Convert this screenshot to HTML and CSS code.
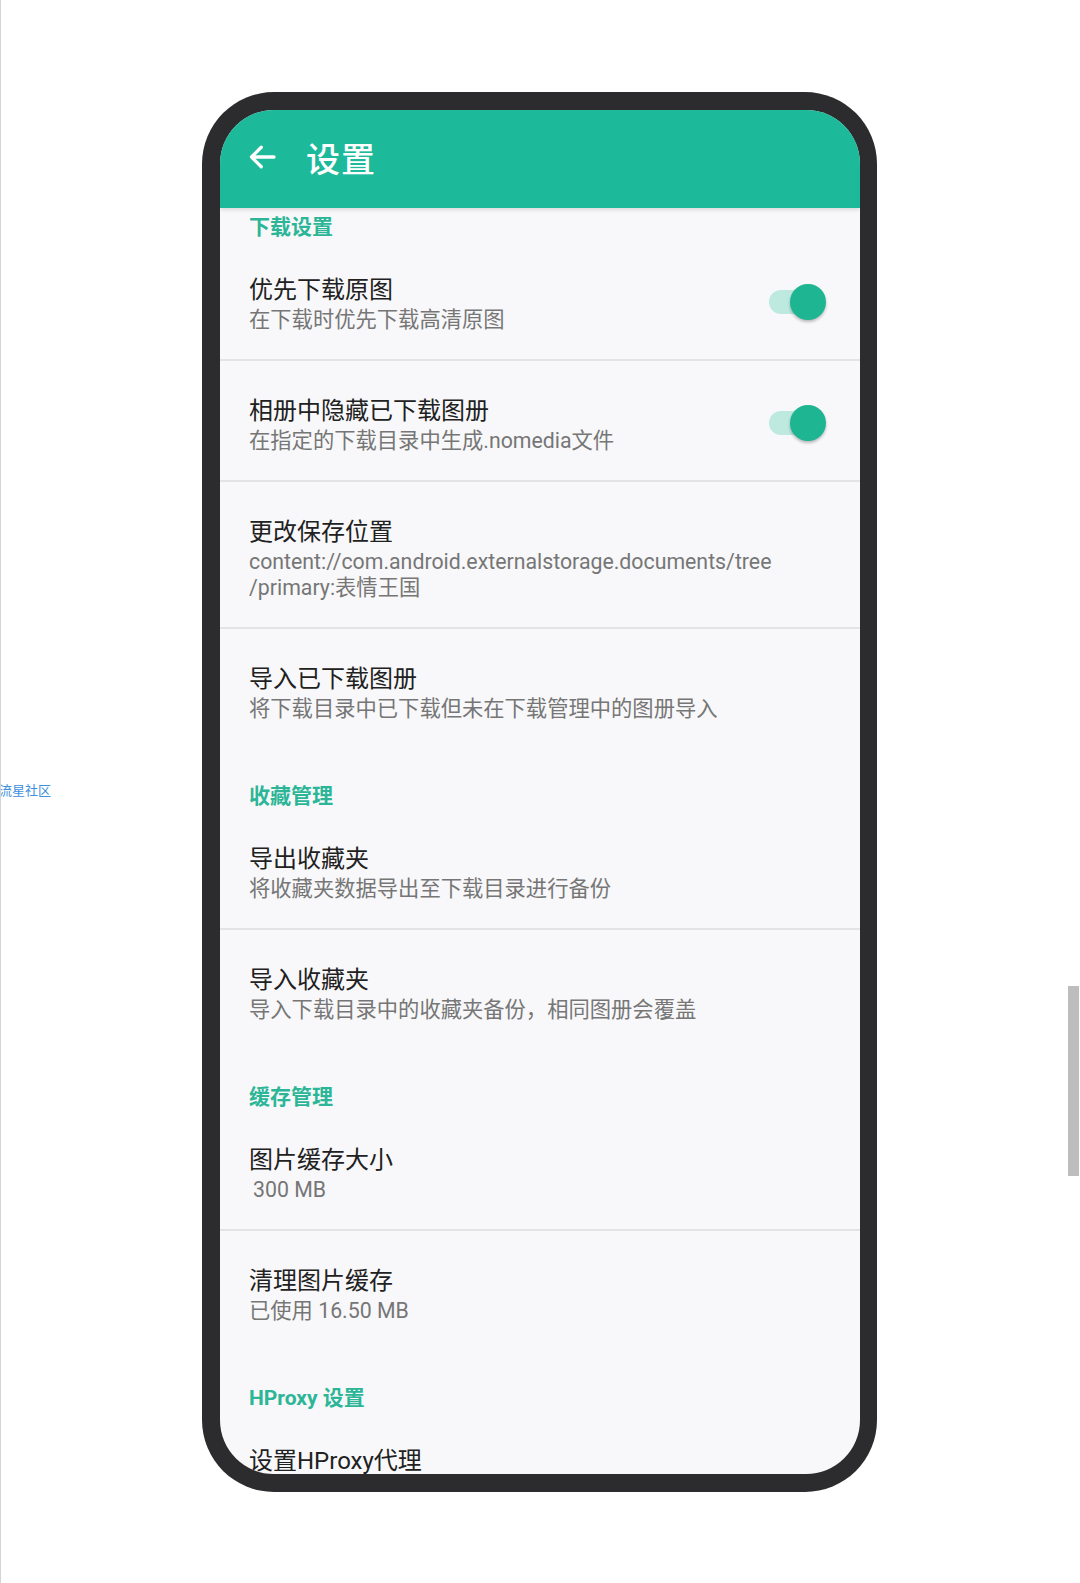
FILE: index.html
```html
<!DOCTYPE html>
<html lang="zh-CN">
<head>
  <meta charset="UTF-8" />
  <title>设置</title>
  <link rel="stylesheet" href="styles.css">
</head>
<body>
  <div class="page">
    <div class="watermark">流星社区</div>
    <div class="scrollbar"></div>

    <div class="phone">
      <div class="screen">
        <div class="appbar">
          <svg class="back" viewBox="0 0 24 24" width="36" height="36">
            <path d="M20 12H5M11.5 5.5L5 12l6.5 6.5" fill="none" stroke="#fff" stroke-width="2.2" stroke-linecap="round" stroke-linejoin="round"/>
          </svg>
          <span class="appbar-title">设置</span>
        </div>

        <div class="list">
          <div class="section first">下载设置</div>
          <div class="item divided">
            <div class="text">
              <div class="title">优先下载原图</div>
              <div class="sub">在下载时优先下载高清原图</div>
            </div>
            <div class="switch"><span class="knob"></span></div>
          </div>
          <div class="item divided">
            <div class="text">
              <div class="title">相册中隐藏已下载图册</div>
              <div class="sub">在指定的下载目录中生成.nomedia文件</div>
            </div>
            <div class="switch"><span class="knob"></span></div>
          </div>
          <div class="item divided">
            <div class="text">
              <div class="title">更改保存位置</div>
              <div class="sub">content://com.android.externalstorage.documents/tree<br>/primary:表情王国</div>
            </div>
          </div>
          <div class="item">
            <div class="text">
              <div class="title">导入已下载图册</div>
              <div class="sub">将下载目录中已下载但未在下载管理中的图册导入</div>
            </div>
          </div>

          <div class="section">收藏管理</div>
          <div class="item divided">
            <div class="text">
              <div class="title">导出收藏夹</div>
              <div class="sub">将收藏夹数据导出至下载目录进行备份</div>
            </div>
          </div>
          <div class="item">
            <div class="text">
              <div class="title">导入收藏夹</div>
              <div class="sub">导入下载目录中的收藏夹备份，相同图册会覆盖</div>
            </div>
          </div>

          <div class="section">缓存管理</div>
          <div class="item divided">
            <div class="text">
              <div class="title">图片缓存大小</div>
              <div class="sub indent">300 MB</div>
            </div>
          </div>
          <div class="item">
            <div class="text">
              <div class="title">清理图片缓存</div>
              <div class="sub">已使用 16.50 MB</div>
            </div>
          </div>

          <div class="section">HProxy 设置</div>
          <div class="item">
            <div class="text">
              <div class="title">设置HProxy代理</div>
            </div>
          </div>
        </div>
      </div>
    </div>
  </div>
</body>
</html>
```

FILE: styles.css
```css
body {
  margin: 0;
  background: #fff;
  font-family: Roboto, "Noto Sans CJK SC", sans-serif;
}
.page {
  position: relative;
  width: 1079px;
  height: 1583px;
  border-left: 1px solid #d4d4d4;
  overflow: hidden;
  padding: 92px 0 0 201px;
  box-sizing: border-box;
}
.watermark {
  position: absolute;
  left: -2px;
  top: 782px;
  font-size: 13px;
  line-height: 18px;
  color: #3d8fe0;
}
.scrollbar {
  position: absolute;
  right: 0;
  top: 986px;
  width: 11px;
  height: 190px;
  background: #bdbdbd;
}
.phone {
  width: 675px;
  height: 1400px;
  background: #2c2c2e;
  border-radius: 72px;
  padding: 18px 17px 18px 18px;
  box-sizing: border-box;
}
.screen {
  height: 100%;
  background: #f8f8fa;
  border-radius: 54px;
  overflow: hidden;
}
.appbar {
  height: 98px;
  background: #1cb99a;
  display: flex;
  align-items: center;
  padding: 0 0 4px 24px;
  box-sizing: border-box;
  box-shadow: 0 2px 4px rgba(0, 0, 0, 0.12);
  position: relative;
}
.appbar-title {
  color: #fff;
  font-size: 34px;
  font-weight: 500;
  margin-left: 26px;
  letter-spacing: 1px;
}
.section {
  padding: 35px 29px 2px;
  line-height: 22px;
  font-size: 21px;
  font-weight: 700;
  color: #2cb697;
}
.section.first {
  padding-top: 8px;
}
.item {
  display: flex;
  align-items: center;
  padding: 35px 34px 28px 29px;
}
.item.divided {
  border-bottom: 2px solid #e3e3e6;
  padding-bottom: 26px;
}
.text {
  flex: 1;
}
.title {
  font-size: 24px;
  line-height: 30px;
  color: #212121;
}
.sub {
  font-size: 21.3px;
  line-height: 26px;
  margin-top: 2px;
  color: #767676;
}
.sub.indent {
  padding-left: 4px;
}
.switch {
  position: relative;
  width: 46px;
  height: 24px;
  border-radius: 12px;
  background: #bde9de;
  margin-right: 11px;
  margin-top: -4px;
}
.knob {
  position: absolute;
  right: -11px;
  top: -6px;
  width: 36px;
  height: 36px;
  border-radius: 50%;
  background: #1db592;
  box-shadow: 0 2px 3px rgba(0, 0, 0, 0.25);
}
```
